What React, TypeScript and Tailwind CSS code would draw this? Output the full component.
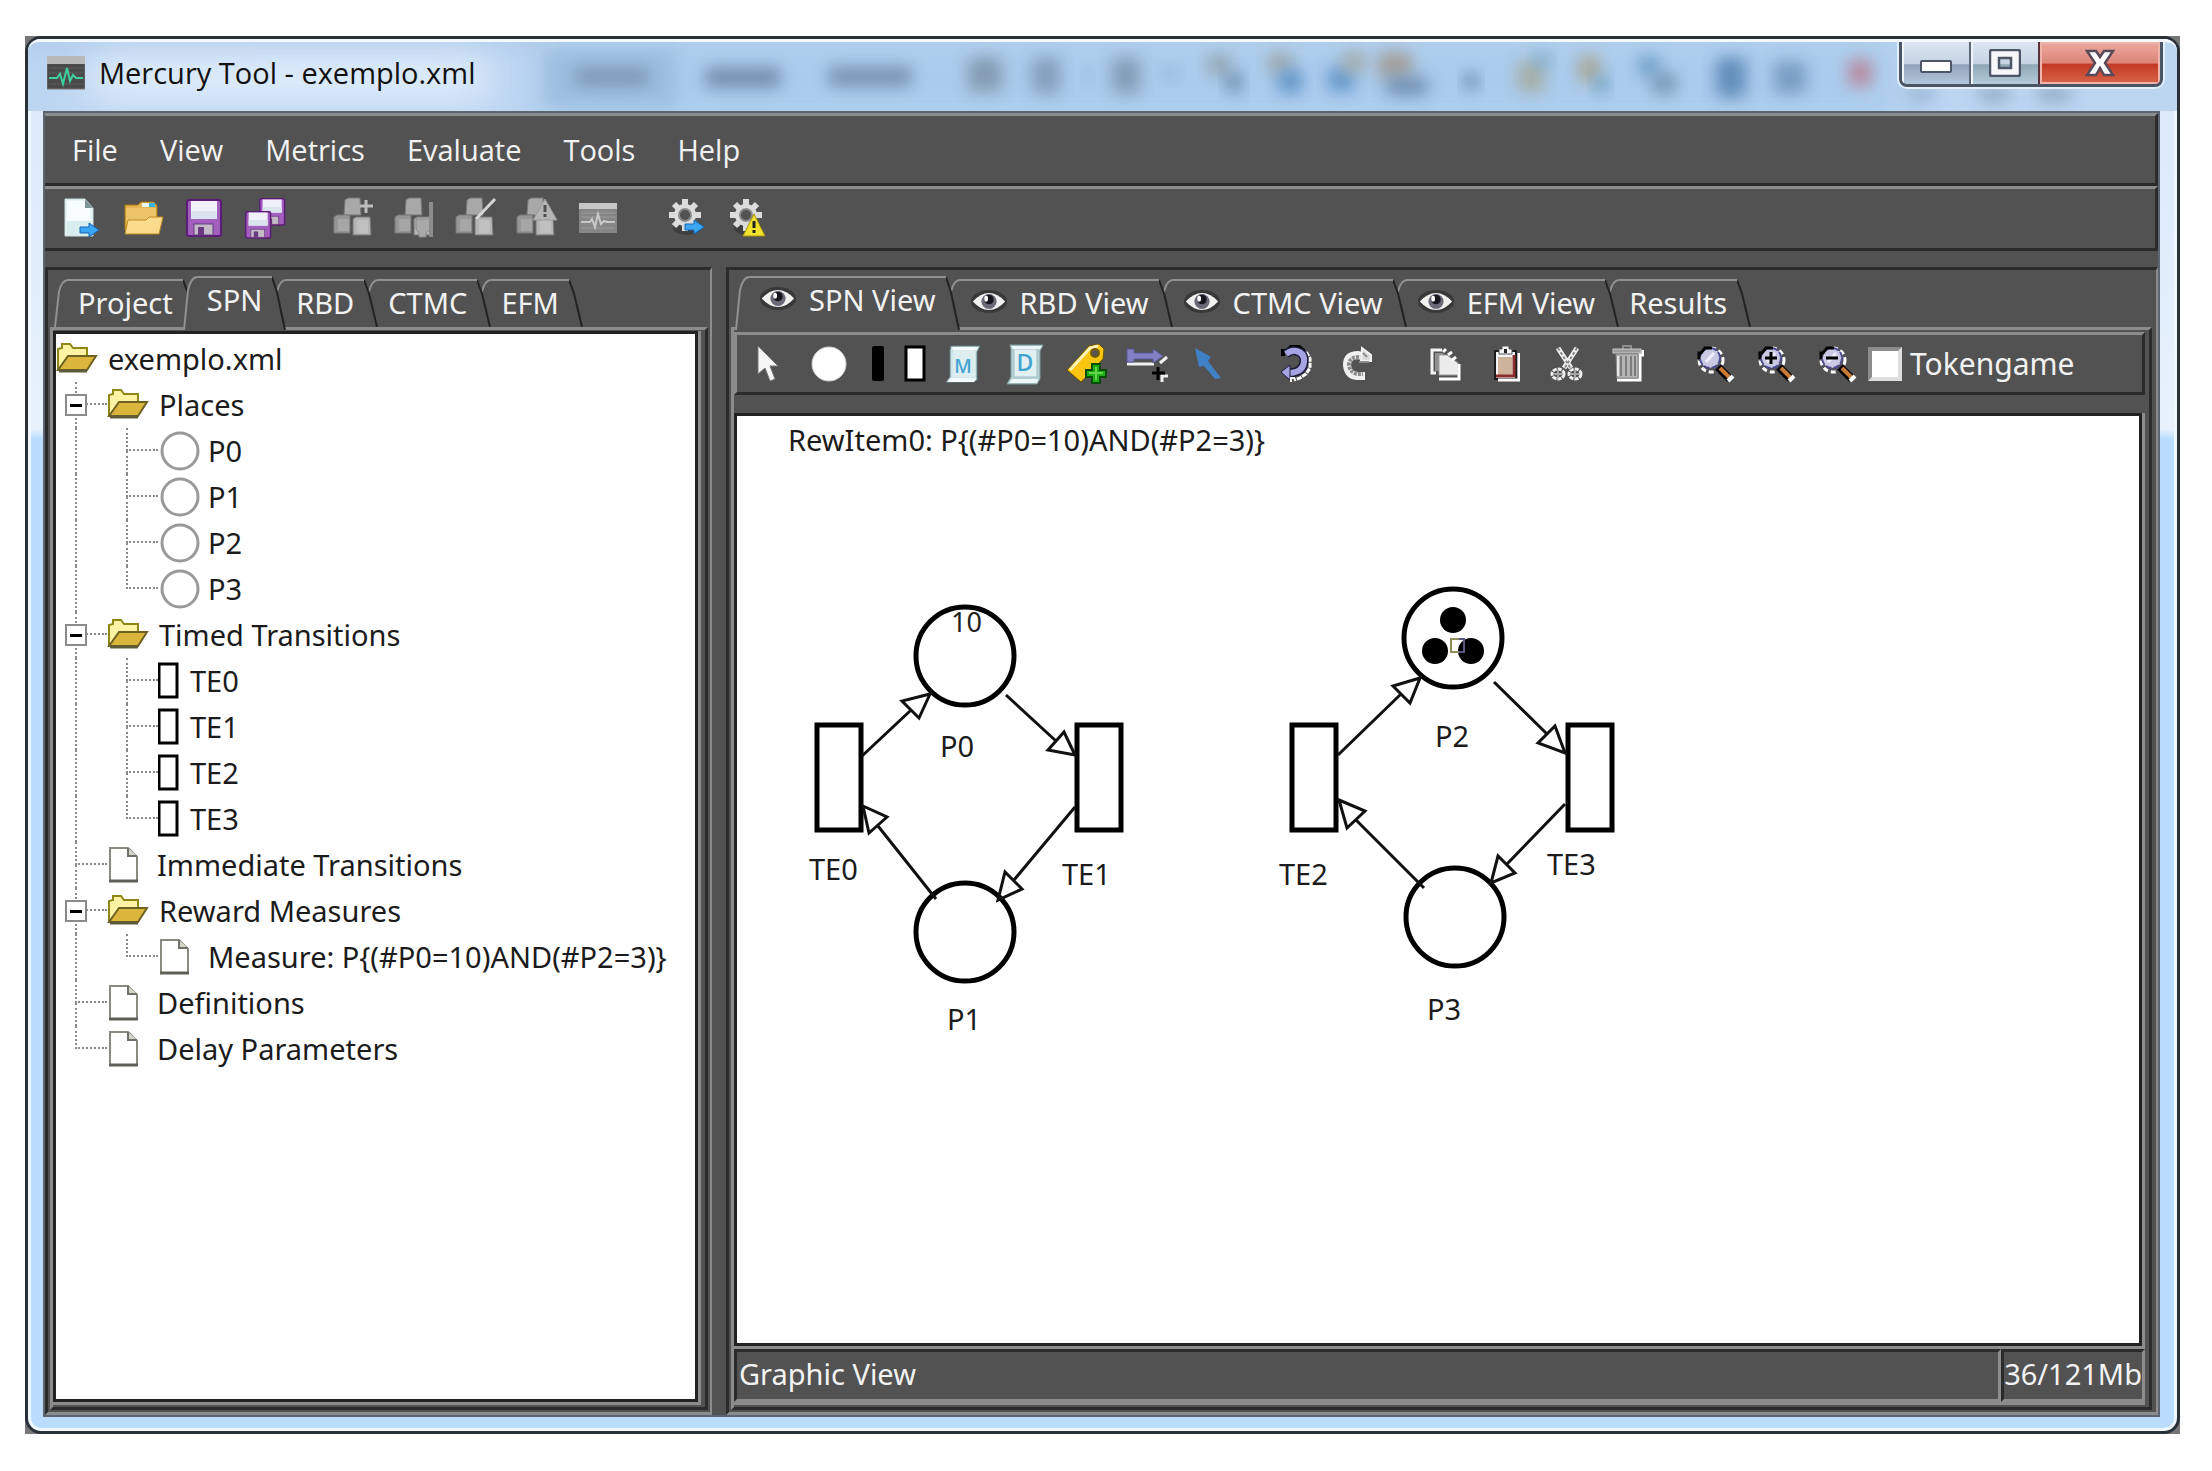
import React from "react";

type IconProps = { w: number; h: number; children: React.ReactNode };

function Icon({ w, h, children }: IconProps) {
  return (
    <svg width={w} height={h} viewBox={`0 0 ${w} ${h}`} fill="none" aria-hidden="true" className="shrink-0">
      {children}
    </svg>
  );
}

/* ---------- title bar ---------- */

function AppIcon() {
  return (
    <Icon w={38} h={34}>
      <rect x="0" y="1" width="38" height="32" fill="#4a4a4a" stroke="#777" />
      <rect x="0" y="0" width="38" height="8" fill="#b9b9b9" />
      <path d="M2 12H36M2 17H36M2 28H36" stroke="#5c5c5c" />
      <path d="M2 22H10L13 18L16 28L20 12L23 25L26 19L29 22H36" stroke="#3fd0a0" strokeWidth="2" />
    </Icon>
  );
}

function GlassBlobs() {
  const blobs: [number, number, number, number, string][] = [
    [575, 26, 74, 20, "#7c97b6"],
    [705, 26, 76, 22, "#6f8aaa"],
    [828, 25, 84, 22, "#7590b0"],
    [968, 16, 34, 36, "#8097ac"],
    [1032, 16, 28, 38, "#7f9ab8"],
    [1084, 30, 8, 10, "#8aa5c2"],
    [1112, 16, 28, 38, "#7f98b0"],
    [1162, 28, 16, 10, "#8fabc9"],
    [1208, 12, 22, 24, "#93a5ac"],
    [1226, 30, 16, 24, "#6c8cab"],
    [1268, 10, 24, 24, "#9fa9a9"],
    [1278, 28, 24, 26, "#5f93c6"],
    [1328, 26, 26, 26, "#5f93c6"],
    [1342, 10, 24, 22, "#a4aaa5"],
    [1378, 10, 34, 28, "#a39c93"],
    [1386, 36, 42, 20, "#6e8caf"],
    [1464, 32, 14, 18, "#6484a6"],
    [1518, 20, 26, 32, "#a5aa9c"],
    [1534, 12, 16, 14, "#6fa4c4"],
    [1578, 14, 22, 28, "#aaa590"],
    [1594, 34, 14, 20, "#6ba0c0"],
    [1638, 14, 22, 22, "#6d9fc4"],
    [1652, 32, 24, 22, "#7391ae"],
    [1716, 16, 30, 42, "#5c88b4"],
    [1774, 20, 32, 34, "#7299bd"],
    [1848, 18, 24, 28, "#b98597"],
    [1908, 48, 26, 14, "#94afcc"],
    [1978, 48, 32, 14, "#8ba3bb"],
    [2036, 48, 36, 14, "#8ba3bb"],
  ];
  return (
    <svg className="absolute inset-0 h-full w-full" aria-hidden="true" preserveAspectRatio="none" viewBox="28 0 2149 72">
      <defs>
        <filter id="soft" x="-50%" y="-100%" width="200%" height="300%">
          <feGaussianBlur stdDeviation="8" />
        </filter>
        <filter id="wide" x="-30%" y="-60%" width="160%" height="220%">
          <feGaussianBlur stdDeviation="22" />
        </filter>
      </defs>
      <rect x="540" y="-10" width="1360" height="100" fill="#9cc2e8" opacity="0.55" filter="url(#wide)" />
      <rect x="-10" y="-20" width="560" height="34" fill="#b2cdec" opacity="0.8" filter="url(#soft)" />
      <rect x="90" y="16" width="400" height="42" fill="#eef5fd" opacity="0.9" filter="url(#wide)" />
      <rect x="545" y="8" width="130" height="58" fill="#93b4d6" opacity="0.6" filter="url(#soft)" />
      {blobs.map(([x, y, w, h, c]) => (
        <rect key={x} x={x} y={y} width={w} height={h} rx="6" fill={c} opacity="0.9" filter="url(#soft)" />
      ))}
    </svg>
  );
}

function TitleBar() {
  return (
    <header className="relative flex h-[72px] shrink-0 items-start overflow-hidden rounded-t-xl border-t-3 border-[#f4f9ff] bg-[#bcd6f2]">
      <GlassBlobs />
      <div className="relative flex flex-1 items-center gap-3.5 self-stretch pb-2 pl-[19px]">
        <AppIcon />
        <h1 className="font-['Open_Sans',sans-serif] text-[29px] leading-9 whitespace-nowrap text-[#111]">Mercury Tool - exemplo.xml</h1>
      </div>
      <div className="relative mr-3.5 flex h-[45px] shrink-0 overflow-hidden rounded-b-lg border-3 border-t-0 border-[#4b5563] shadow-[0_0_0_2px_#e3effb]">
        <button aria-label="Minimize" className="flex w-[69px] items-end justify-center border-r-2 border-[#5b6676] bg-[linear-gradient(#dce6f2_0%,#c5d3e2_52%,#8fa3ba_54%,#b4c6da_100%)] pb-2.5 shadow-[inset_2px_0_0_#eef4fa]">
          <Icon w={32} h={14}>
            <rect x="1" y="1" width="30" height="11" rx="1" fill="#fff" stroke="#4c5668" strokeWidth="2" />
          </Icon>
        </button>
        <button aria-label="Maximize" className="flex w-[69px] items-center justify-center border-r-2 border-[#5b3038] bg-[linear-gradient(#dce6f2_0%,#c5d3e2_52%,#8fa8b5_54%,#b4cbda_100%)] shadow-[inset_2px_0_0_#eef4fa]">
          <Icon w={32} h={28}>
            <path fillRule="evenodd" d="M1 3Q1 1 3 1H29Q31 1 31 3V25Q31 27 29 27H3Q1 27 1 25ZM10 9V19H22V9Z" fill="#f7f7f7" stroke="#4c5668" strokeWidth="2.5" />
          </Icon>
        </button>
        <button aria-label="Close" className="flex w-[120px] items-center justify-center bg-[linear-gradient(#ecaaa0_0%,#dd8377_50%,#c43a24_53%,#d9634a_100%)] shadow-[inset_0_0_0_2px_#f0b5aa]">
          <Icon w={30} h={28}>
            <path d="M2 2H11L15 8L19 2H28L20 14L28 26H19L15 19L11 26H2L10 14Z" fill="#fff" stroke="#5a4a58" strokeWidth="2.5" />
          </Icon>
        </button>
      </div>
    </header>
  );
}

/* ---------- main toolbar icons ---------- */

function BlueArrow({ x, y }: { x: number; y: number }) {
  return (
    <path transform={`translate(${x} ${y})`} d="M0 4H9V0L19 7L9 14V10H0Z" fill="#3ba7f2" stroke="#1667b8" strokeWidth="1" />
  );
}

function NewIcon() {
  return (
    <Icon w={38} h={42}>
      <path d="M2 2H22L30 11V39H2Z" fill="#eaf6f6" stroke="#c9dede" />
      <path d="M4 4H20L27 12V37H4Z" fill="#f8fdfd" />
      <path d="M4 24H28V38H4Z" fill="#d8eeee" />
      <path d="M22 2V11H30Z" fill="#7d9696" />
      <BlueArrow x={17} y={26} />
    </Icon>
  );
}

function OpenIcon() {
  return (
    <Icon w={42} h={36}>
      <path d="M3 5H16L19 2H32L35 6V30H3Z" fill="#e5b450" stroke="#a87413" />
      <path d="M20 3H32V7H20Z" fill="#e8f6fa" />
      <path d="M27 3H33V7H27Z" fill="#35b4dc" />
      <path d="M4 8H34V22H4Z" fill="#eec46a" />
      <path d="M6 20H24L27 17H41L37 34H3Z" fill="#fbdc8c" stroke="#c08a22" />
    </Icon>
  );
}

function Floppy({ x, y, s }: { x: number; y: number; s: number }) {
  return (
    <g transform={`translate(${x} ${y}) scale(${s})`}>
      <rect x="1" y="1" width="34" height="36" rx="2" fill="#a35fbd" stroke="#5d1b78" strokeWidth="2" />
      <rect x="5" y="2" width="26" height="18" fill="#f1f1fb" />
      <rect x="5" y="12" width="26" height="8" fill="#dbe4ee" />
      <rect x="8" y="25" width="19" height="11" fill="#c3bcc8" stroke="#6a3b7d" />
      <rect x="12" y="28" width="6" height="8" fill="#6a3a80" />
    </g>
  );
}

function SaveIcon() {
  return (
    <Icon w={38} h={40}>
      <Floppy x={1} y={1} s={1} />
    </Icon>
  );
}

function SaveAllIcon() {
  return (
    <Icon w={42} h={42}>
      <Floppy x={15} y={1} s={0.73} />
      <Floppy x={1} y={14} s={0.73} />
    </Icon>
  );
}

function Cubes({ children }: { children: React.ReactNode }) {
  return (
    <Icon w={42} h={42}>
      <g stroke="#787878">
        <path d="M12 3L15 1H27L28 18H11Z" fill="#a8a8a8" />
        <path d="M1 20L4 18H17V36H1Z" fill="#969696" />
        <path d="M20 22L23 20H37L38 38H20Z" fill="#b4b4b4" />
      </g>
      <path d="M5 22H16V34H5Z" fill="#a6a6a6" />
      <path d="M24 23H35V36H24Z" fill="#c0c0c0" />
      {children}
    </Icon>
  );
}

function CubesAddIcon() {
  return (
    <Cubes>
      <path d="M33 3V16M27 9H40" stroke="#bdbdbd" strokeWidth="3" />
    </Cubes>
  );
}
function CubesEraseIcon() {
  return (
    <Cubes>
      <path d="M22 22H36V33L32 36V40H25V36L22 32Z" fill="#a9a9a9" stroke="#8a8a8a" />
      <path d="M37 5V40" stroke="#8c8c8c" strokeWidth="4" />
    </Cubes>
  );
}
function CubesEditIcon() {
  return (
    <Cubes>
      <path d="M40 2L21 22" stroke="#d6d6d6" strokeWidth="3" />
    </Cubes>
  );
}
function CubesWarnIcon() {
  return (
    <Cubes>
      <path d="M29 2L41 23H17Z" fill="#b5b5b5" stroke="#989898" />
      <path d="M29 8V15M29 17V20" stroke="#4f4f4f" strokeWidth="3" />
    </Cubes>
  );
}
function MonitorIcon() {
  return (
    <Icon w={40} h={32}>
      <rect x="1" y="1" width="38" height="30" fill="#868686" />
      <rect x="1" y="1" width="38" height="6" fill="#c6c6c6" />
      <path d="M3 11H37M3 15H37M3 26H37" stroke="#9b9b9b" />
      <path d="M3 20H12L14 17L17 25L20 12L23 22L26 19L29 20H37" stroke="#c9c9c9" strokeWidth="2" />
    </Icon>
  );
}

function Gear() {
  return (
    <g>
      <ellipse cx="20" cy="30" rx="14" ry="7" fill="#333" opacity="0.6" />
      <g stroke="#dcdcdc" strokeWidth="6">
        <path d="M18 1V33M2 17H34M7 6L29 28M29 6L7 28" />
      </g>
      <circle cx="18" cy="17" r="11" fill="#dcdcdc" />
      <circle cx="18" cy="17" r="6" fill="#525252" stroke="#8a8a8a" strokeWidth="2" />
    </g>
  );
}

function GearRunIcon() {
  return (
    <Icon w={40} h={40}>
      <Gear />
      <BlueArrow x={18} y={22} />
    </Icon>
  );
}
function GearWarnIcon() {
  return (
    <Icon w={40} h={40}>
      <Gear />
      <path d="M26 16L37 38H15Z" fill="#f2e22e" stroke="#a8940a" strokeWidth="1" />
      <path d="M26 23V30M26 32V35" stroke="#222" strokeWidth="3" />
    </Icon>
  );
}

/* ---------- view toolbar icons ---------- */

function EyeIcon() {
  return (
    <svg width="38" height="25" viewBox="0 0 40 26" fill="none" aria-hidden="true" className="shrink-0">
      <ellipse cx="20" cy="13" rx="19" ry="12" fill="#353535" opacity="0.9" />
      <path d="M3 13Q11 4 20 4T37 13Q29 22 20 22T3 13Z" fill="#f0f0ee" />
      <circle cx="20" cy="13" r="8" fill="#6c6878" />
      <circle cx="20" cy="11" r="5" fill="#17151d" />
      <ellipse cx="17" cy="10" rx="2" ry="3" fill="#fff" />
    </svg>
  );
}

function PointerIcon() {
  return (
    <Icon w={24} h={38}>
      <path d="M2 1L22 21H14L19 34L14 36L9 23L2 29Z" fill="#f6f6f6" stroke="#777" />
    </Icon>
  );
}
function PlaceIcon() {
  return (
    <Icon w={36} h={36}>
      <circle cx="18" cy="18" r="17" fill="#fff" stroke="#d0d0d0" />
    </Icon>
  );
}
function ImmediateIcon() {
  return (
    <Icon w={12} h={36}>
      <rect width="12" height="35" rx="2" fill="#000" />
    </Icon>
  );
}
function TimedIcon() {
  return (
    <Icon w={22} h={38}>
      <rect x="2" y="2" width="18" height="33" fill="#fff" stroke="#000" strokeWidth="3" />
    </Icon>
  );
}

function ScrollM() {
  return (
    <Icon w={38} h={40}>
      <path d="M6 2H35L32 8V36L29 38H1L5 33V6Z" fill="#cfe6e9" stroke="#5f7f83" />
      <path d="M8 6H30V33H8Z" fill="#deeef0" />
      <path d="M2 38L6 34H31L29 38ZM7 3H33L32 6H8Z" fill="#f4fbfb" />
      <text x="18" y="29" textAnchor="middle" fontSize="19" fontWeight="600" fill="#43a4d0" fontFamily="Open Sans, sans-serif">
        M
      </text>
    </Icon>
  );
}

function ScrollD() {
  return (
    <Icon w={38} h={42}>
      <path d="M4 2H37L34 8V36L31 41H1L5 34V6Z" fill="#b5cfd3" stroke="#7f9da1" />
      <path d="M8 6H31V34H8Z" fill="#e2f0f2" stroke="#a3c0c4" />
      <path d="M3 40L6 36H32L31 40ZM5 3H36L34 6H7Z" fill="#eef7f8" />
      <text x="19" y="28" textAnchor="middle" fontSize="23" fontWeight="600" fill="#43a4d0" fontFamily="Open Sans, sans-serif">
        D
      </text>
    </Icon>
  );
}

function TagIcon() {
  return (
    <Icon w={42} h={42}>
      <path d="M2 27L24 3L34 1L39 6L38 16L16 39Z" fill="#fbc511" stroke="#6f5300" strokeWidth="1" />
      <path d="M5 27L25 5L33 3" stroke="#fff3b8" strokeWidth="3" />
      <circle cx="30" cy="10" r="4" fill="#555" stroke="#7a5b00" strokeWidth="2" />
      <path d="M27 21H35V27H41V34H35V40H27V34H21V27H27Z" fill="#1fae14" stroke="#064d05" strokeWidth="2" />
      <path d="M31 24V37M24 30H38" stroke="#62d94c" strokeWidth="2" />
    </Icon>
  );
}
function ArcIcon() {
  return (
    <Icon w={42} h={38}>
      <path d="M1 19H28M34 18L41 12" stroke="#f2f2f2" strokeWidth="3" />
      <path d="M1 4H8V8H27V4L37 11L27 18V14H8V17H1Z" fill="#8380c4" stroke="#5a5796" />
      <path d="M36 37V31H42" stroke="#eee" strokeWidth="3" />
      <path d="M32 22V35M26 28H39" stroke="#000" strokeWidth="3" />
    </Icon>
  );
}
function BlueLineIcon() {
  return (
    <Icon w={30} h={36}>
      <path d="M2 2L18 11L15 15L28 32L22 33L11 20L6 21Z" fill="#4080c6" />
    </Icon>
  );
}
function UndoIcon() {
  return (
    <Icon w={36} h={40}>
      <path d="M5 12V7H9L13 3H21L26 7" stroke="#000" strokeWidth="4" />
      <path d="M28 8L32 14V24L28 30L22 34L16 36" stroke="#fff" strokeWidth="3" strokeDasharray="5 1" />
      <path d="M8 10Q13 6 18 7Q27 9 26 18Q25 28 12 29" stroke="#1c1c3c" strokeWidth="9" />
      <path d="M8 10Q13 6 18 7Q27 9 26 18Q25 28 12 29" stroke="#a6a4e2" strokeWidth="6" />
      <path d="M12 21L3 28L12 36Z" fill="#a6a4e2" stroke="#1c1c3c" strokeWidth="1" />
      <path d="M13 38V34H17" stroke="#f2f2f2" strokeWidth="2" />
    </Icon>
  );
}
function RedoIcon() {
  return (
    <Icon w={32} h={36}>
      <path d="M24 11L17 9Q6 9 6 19Q7 29 16 30H24" stroke="#f0f0f0" strokeWidth="8" />
      <path d="M22 12L16 11Q8 12 8 19Q9 26 16 28H22" stroke="#8c8c8c" strokeWidth="4" strokeDasharray="3 1" />
      <path d="M21 2L30 9V15H20Z" fill="#dcdcdc" stroke="#f4f4f4" strokeWidth="2" />
      <path d="M22 7L26 11M18 16H28" stroke="#8c8c8c" strokeWidth="2" />
    </Icon>
  );
}
function CopyIcon() {
  return (
    <Icon w={34} h={36}>
      <path d="M14 4H4V27H8" stroke="#f3f3f3" strokeWidth="3" />
      <path d="M7 7H15V25H7Z" fill="#8f8f8f" />
      <path d="M11 9H19L30 17V29H11Z" fill="#ececec" stroke="#9d9d9d" />
      <path d="M15 6L18 3M20 9L24 6M24 14L28 11" stroke="#fff" strokeWidth="3" />
      <path d="M11 33H31V18" stroke="#fff" strokeWidth="3" />
    </Icon>
  );
}
function PasteIcon() {
  return (
    <Icon w={28} h={38}>
      <path d="M3 6H24V34H3Z" fill="#f4f4f4" stroke="#1b1b1b" strokeWidth="2" />
      <path d="M6 35H27V8" stroke="#fff" strokeWidth="3" />
      <path d="M6 12H20V30H6Z" fill="#cfb49c" />
      <path d="M22 10V31H4" stroke="#8d2d2d" strokeWidth="3" />
      <path d="M7 8V4H10V1H17V4H20V9H7Z" fill="#f5f5f5" stroke="#555" />
      <rect x="12" y="4" width="3" height="4" fill="#222" />
    </Icon>
  );
}
function CutIcon() {
  return (
    <Icon w={34} h={38}>
      <path d="M8 3L21 23M27 3L14 23" stroke="#f1f1f1" strokeWidth="5" />
      <path d="M8 3L21 24M27 3L14 24" stroke="#8a8a8a" strokeWidth="2" strokeDasharray="3 2" />
      <ellipse cx="8" cy="29" rx="6" ry="5" stroke="#efefef" strokeWidth="3" strokeDasharray="4 1" />
      <ellipse cx="25" cy="29" rx="6" ry="5" stroke="#efefef" strokeWidth="3" strokeDasharray="4 1" />
      <path d="M4 29H12M8 25V33M21 29H29M25 25V33" stroke="#a5a5a5" strokeWidth="2" />
    </Icon>
  );
}
function TrashIcon() {
  return (
    <Icon w={32} h={38}>
      <path d="M11 4V1H19V4" stroke="#8e8e8e" strokeWidth="2" />
      <rect x="1" y="4" width="28" height="4" fill="#9c9c9c" stroke="#c9c9c9" />
      <path d="M5 35H28V10H31V5" stroke="#fff" strokeWidth="3" />
      <path d="M4 9H26V33H5Z" fill="#b5b5b5" stroke="#8a8a8a" />
      <path d="M9 11V31M14 11V31M19 11V31M23 11V31" stroke="#7d7d7d" strokeWidth="2" />
      <path d="M6 11V31" stroke="#e5e5e5" strokeWidth="2" />
    </Icon>
  );
}
function ZoomIcon({ sign }: { sign?: "+" | "-" }) {
  return (
    <Icon w={38} h={38}>
      <circle cx="14" cy="15" r="12" stroke="#fff" strokeWidth="3" strokeDasharray="5 3" />
      <circle cx="13" cy="13" r="10" fill="#c9c9e4" stroke="#4c4a92" strokeWidth="2" strokeDasharray="6 2" />
      <path d="M2 14V8H4L8 3H15" stroke="#000" strokeWidth="3" />
      <path d="M9 17L17 8" stroke="#ededfb" strokeWidth="3" />
      {sign && <path d={sign === "+" ? "M13 7V19M7 13H19" : "M7 13H19"} stroke="#000" strokeWidth="3" />}
      <path d="M21 22L33 34" stroke="#000" strokeWidth="8" />
      <path d="M23 23L34 34" stroke="#c97a35" strokeWidth="4" />
      <path d="M31 36L36 31" stroke="#fff" strokeWidth="4" />
    </Icon>
  );
}

/* ---------- tabs ---------- */

type Tab = { label: string; z: string; selected?: boolean; eye?: boolean };

function TabStrip({ tabs }: { tabs: Tab[] }) {
  return (
    <div role="tablist" className="flex h-[57px] items-end pl-1">
      {tabs.map((t) => (
        <button
          key={t.label}
          role="tab"
          aria-selected={!!t.selected}
          className={`relative -mr-3.5 flex items-stretch ${t.z} ${t.selected ? "-mb-[3px] h-[54px]" : "h-12"}`}
        >
          <svg className="h-full w-3.5 shrink-0" viewBox="0 0 14 50" preserveAspectRatio="none" aria-hidden="true">
            <path d="M1 50L5 13Q8 1 14 1V50Z" fill="#525252" />
            <path d="M1 50L5 13Q8 1 14 1" fill="none" stroke="#909090" strokeWidth="2" />
          </svg>
          <span className="flex items-start gap-3 border-t-2 border-[#909090] bg-[#525252] px-2.5">
            {t.eye && (
              <span className="flex h-10 items-center">
                <EyeIcon />
              </span>
            )}
            <span className="text-[29px] leading-11 whitespace-nowrap text-[#f2f2f2]">{t.label}</span>
          </span>
          <svg className="h-full w-3.5 shrink-0" viewBox="0 0 14 50" preserveAspectRatio="none" aria-hidden="true">
            <path d="M0 1L5 15L13 50H0Z" fill="#525252" />
            <path d="M0 1L5 15L13 50" fill="none" stroke="#222" strokeWidth="2" />
          </svg>
        </button>
      ))}
    </div>
  );
}

/* ---------- project tree ---------- */

type Node = {
  label: string;
  kind: "folder" | "place" | "timed" | "doc";
  depth: 0 | 1 | 2;
  open?: boolean;
  last?: boolean;
};

const tree: Node[] = [
  { label: "exemplo.xml", kind: "folder", depth: 0 },
  { label: "Places", kind: "folder", depth: 1, open: true },
  { label: "P0", kind: "place", depth: 2 },
  { label: "P1", kind: "place", depth: 2 },
  { label: "P2", kind: "place", depth: 2 },
  { label: "P3", kind: "place", depth: 2, last: true },
  { label: "Timed Transitions", kind: "folder", depth: 1, open: true },
  { label: "TE0", kind: "timed", depth: 2 },
  { label: "TE1", kind: "timed", depth: 2 },
  { label: "TE2", kind: "timed", depth: 2 },
  { label: "TE3", kind: "timed", depth: 2, last: true },
  { label: "Immediate Transitions", kind: "doc", depth: 1 },
  { label: "Reward Measures", kind: "folder", depth: 1, open: true },
  { label: "Measure: P{(#P0=10)AND(#P2=3)}", kind: "doc", depth: 2, last: true },
  { label: "Definitions", kind: "doc", depth: 1 },
  { label: "Delay Parameters", kind: "doc", depth: 1, last: true },
];

const iconSlot: Record<Node["kind"], string> = {
  folder: "flex pr-2.5",
  place: "flex pl-0.5 pr-2",
  timed: "flex pr-2.5",
  doc: "flex pr-[18px]",
};

function Elbow({ last }: { last?: boolean }) {
  return (
    <span className="flex h-full w-[51px] shrink-0 flex-col pl-[19px]">
      <span className="h-1/2 border-b-2 border-l-2 border-dotted border-[#8a8a8a]" />
      <span className={last ? "h-1/2" : "h-1/2 border-l-2 border-dotted border-[#8a8a8a]"} />
    </span>
  );
}

function Trunk() {
  return (
    <span className="flex h-full w-[51px] shrink-0 pl-[19px]">
      <span className="h-full border-l-2 border-dotted border-[#8a8a8a]" />
    </span>
  );
}

function TreeIcon({ kind }: { kind: Node["kind"] }) {
  if (kind === "folder")
    return (
      <Icon w={42} h={38}>
        <path d="M2 30V9L6 8V4H14L17 8H31V17" fill="#fdf3a4" stroke="#8f8616" strokeWidth="2" />
        <path d="M2 30L12 16H40L31 30Z" fill="#dcb63c" stroke="#6d6220" strokeWidth="2" />
        <path d="M3 31H31" stroke="#5f5a3a" strokeWidth="3" />
      </Icon>
    );
  if (kind === "place")
    return (
      <Icon w={40} h={40}>
        <circle cx="20" cy="20" r="18" fill="#fff" stroke="#9a9a9a" strokeWidth="3" />
      </Icon>
    );
  if (kind === "timed")
    return (
      <Icon w={22} h={38}>
        <rect x="1" y="2" width="18" height="33" fill="#fff" stroke="#000" strokeWidth="3" />
      </Icon>
    );
  return (
    <Icon w={32} h={38}>
      <path d="M3 2H21L30 11V35H3Z" fill="#fff" stroke="#8a8a80" strokeWidth="2" />
      <path d="M21 2V10H30" fill="#d6d6c8" stroke="#70706a" strokeWidth="2" />
      <path d="M2 35H31" stroke="#5f5f58" strokeWidth="3" />
    </Icon>
  );
}

function TreeRow({ node }: { node: Node }) {
  return (
    <li className="relative flex h-[46px] items-center whitespace-nowrap">
      {node.depth === 2 && <Trunk />}
      {node.depth > 0 && <Elbow last={node.last} />}
      {node.open && (
        <button aria-label={`Collapse ${node.label}`} className="absolute left-[9px] flex size-[22px] items-center justify-center border-2 border-[#8a8a8a] bg-white">
          <span className="h-[3px] w-3 bg-black" />
        </button>
      )}
      <span className={iconSlot[node.kind]}>
        <TreeIcon kind={node.kind} />
      </span>
      <span className="text-[29px] leading-10 text-[#1b1b1b]">{node.label}</span>
    </li>
  );
}

/* ---------- petri net ---------- */

const places: [string, number, number, number, number][] = [
  ["P0", 965, 656, 940, 757],
  ["P1", 965, 932, 947, 1030],
  ["P2", 1453, 638, 1435, 747],
  ["P3", 1455, 917, 1427, 1020],
];
const transitions: [string, number, number, number][] = [
  ["TE0", 817, 809, 880],
  ["TE1", 1077, 1062, 885],
  ["TE2", 1292, 1279, 885],
  ["TE3", 1568, 1547, 875],
];
const arcs = [
  "M862 756L910 711M930 694L902 701L919 718Z",
  "M1006 695L1056 741M1075 755L1064 732L1048 750Z",
  "M1075 807L1014 880M998 900L1005 872L1022 889Z",
  "M936 899L878 826M863 806L887 817L869 833Z",
  "M1338 755L1401 694M1420 678L1393 686L1410 703Z",
  "M1494 682L1547 734M1565 753L1555 726L1538 743Z",
  "M1565 804L1507 864M1491 883L1498 856L1515 873Z",
  "M1424 888L1356 820M1339 800L1365 811L1347 828Z",
];

function PetriNet() {
  return (
    <svg width="1402" height="720" viewBox="737 416 1402 720" fill="none" className="block max-w-none" fontSize="29" fontFamily="Noto Sans, sans-serif">
      <text x="788" y="451" fill="#1b1b1b">RewItem0: P{"{"}(#P0=10)AND(#P2=3){"}"}</text>
      {places.map(([name, cx, cy, tx, ty]) => (
        <g key={name}>
          <circle cx={cx} cy={cy} r="49" fill="#fff" stroke="#000" strokeWidth="5" />
          <text x={tx} y={ty} fill="#1b1b1b">{name}</text>
        </g>
      ))}
      <text x="951" y="632" fontSize="27" fill="#222">10</text>
      {transitions.map(([name, x, tx, ty]) => (
        <g key={name}>
          <rect x={x} y="725" width="44" height="105" fill="#fff" stroke="#000" strokeWidth="5" />
          <text x={tx} y={ty} fill="#1b1b1b">{name}</text>
        </g>
      ))}
      {arcs.map((d) => (
        <path key={d} d={d} stroke="#111" strokeWidth="3" />
      ))}
      <circle cx="1453" cy="620" r="13" fill="#000" />
      <circle cx="1435" cy="651" r="13" fill="#000" />
      <circle cx="1471" cy="651" r="13" fill="#000" />
      <path d="M1459 639H1451V652H1459" stroke="#8f8c5c" strokeWidth="2" />
      <path d="M1459 639H1464V652H1459" stroke="#5b5784" strokeWidth="2" />
    </svg>
  );
}

/* ---------- application ---------- */

const mainTools: [string, React.ReactNode][][] = [
  [
    ["New", <NewIcon />],
    ["Open", <OpenIcon />],
    ["Save", <SaveIcon />],
    ["Save all", <SaveAllIcon />],
  ],
  [
    ["Add block", <CubesAddIcon />],
    ["Clear block", <CubesEraseIcon />],
    ["Edit block", <CubesEditIcon />],
    ["Check block", <CubesWarnIcon />],
    ["Monitor", <MonitorIcon />],
  ],
  [
    ["Run", <GearRunIcon />],
    ["Run with warnings", <GearWarnIcon />],
  ],
];

const viewTools: [string, React.ReactNode, string][][] = [
  [
    ["Select", <PointerIcon />, "w-[61px]"],
    ["Place", <PlaceIcon />, "w-[61px]"],
    ["Immediate transition", <ImmediateIcon />, "w-[37px]"],
    ["Timed transition", <TimedIcon />, "w-[37px]"],
    ["Measure", <ScrollM />, "w-[61px]"],
    ["Definition", <ScrollD />, "w-[61px]"],
    ["Label", <TagIcon />, "w-[61px]"],
    ["Arc", <ArcIcon />, "w-[61px]"],
    ["Inhibitor arc", <BlueLineIcon />, "w-[61px]"],
  ],
  [
    ["Undo", <UndoIcon />, "w-[61px]"],
    ["Redo", <RedoIcon />, "w-[61px]"],
  ],
  [
    ["Copy", <CopyIcon />, "w-[61px]"],
    ["Paste", <PasteIcon />, "w-[61px]"],
    ["Cut", <CutIcon />, "w-[61px]"],
    ["Delete", <TrashIcon />, "w-[61px]"],
  ],
  [
    ["Zoom", <ZoomIcon />, "w-[61px]"],
    ["Zoom in", <ZoomIcon sign="+" />, "w-[61px]"],
    ["Zoom out", <ZoomIcon sign="-" />, "w-[61px]"],
  ],
];

const panel =
  "flex min-h-0 flex-col border-t-3 border-l-3 border-r-2 border-b-3 border-t-[#2b2b2b] border-l-[#2b2b2b] border-r-[#8c8c8c] border-b-[#8c8c8c]";
const body =
  "flex min-h-0 flex-1 flex-col border-t-3 border-l-3 border-r-3 border-b-3 border-t-[#8c8c8c] border-l-[#8c8c8c] border-r-[#2b2b2b] border-b-[#2b2b2b]";

export default function App() {
  return (
    <div className="flex h-screen bg-white pt-9 pr-[35px] pb-[37px] pl-[25px] font-['Noto_Sans',sans-serif]">
      <div className="flex flex-1 bg-[#777]">
        <div className="flex min-w-0 flex-1 flex-col rounded-2xl border-3 border-[#2a3038] bg-[linear-gradient(#d9e8fa_0,#e8f2fd_390px,#b9dcff_400px,#b9dcff_100%)] shadow-[inset_0_0_0_3px_#eff7ff]">
          <TitleBar />
          <div className="mr-[17px] mb-3.5 ml-[15px] flex min-h-0 flex-1 flex-col border-2 border-[#5d6670] bg-[#525252]">
            <nav aria-label="Main menu" className="flex h-[73px] shrink-0 items-center gap-[42px] border-t-3 border-r-3 border-b-3 border-t-[#8c8c8c] border-r-[#2b2b2b] border-b-[#2b2b2b] pl-[27px] font-['Open_Sans',sans-serif]">
              {["File", "View", "Metrics", "Evaluate", "Tools", "Help"].map((m) => (
                <button key={m} className="text-[29px] leading-10 text-[#f2f2f2]">
                  {m}
                </button>
              ))}
            </nav>
            <div role="toolbar" aria-label="Main toolbar" className="flex h-[65px] shrink-0 items-center gap-7 border-t-3 border-r-3 border-b-3 border-t-[#8c8c8c] border-r-[#2b2b2b] border-b-[#2b2b2b] pb-0.5 pl-1.5">
              {mainTools.map((group, i) => (
                <div key={i} className="flex">
                  {group.map(([name, icon]) => (
                    <button key={name} aria-label={name} className="flex w-[61px] items-center justify-center">
                      {icon}
                    </button>
                  ))}
                </div>
              ))}
            </div>

            <main className="flex min-h-0 flex-1 gap-3.5 pt-4">
              <section aria-label="Project" className={`w-[667px] shrink-0 px-0.5 pb-0.5 ${panel}`}>
                <TabStrip
                  tabs={[
                    { label: "Project", z: "z-0" },
                    { label: "SPN", z: "z-50", selected: true },
                    { label: "RBD", z: "z-30" },
                    { label: "CTMC", z: "z-20" },
                    { label: "EFM", z: "z-10" },
                  ]}
                />
                <div className={`pt-px pr-1 pb-0.5 ${body}`}>
                  <div className="flex min-h-0 flex-1 border-r-3 border-b-3 border-[#8c8c8c]">
                    <ul className="min-w-0 flex-1 overflow-hidden border-3 border-[#222] bg-white pt-0.5">
                      {tree.map((n) => (
                        <TreeRow key={n.label} node={n} />
                      ))}
                    </ul>
                  </div>
                </div>
              </section>

              <section aria-label="Views" className={`min-w-0 flex-1 pr-1 pb-0.5 pl-0.5 ${panel}`}>
                <TabStrip
                  tabs={[
                    { label: "SPN View", z: "z-50", selected: true, eye: true },
                    { label: "RBD View", z: "z-40", eye: true },
                    { label: "CTMC View", z: "z-30", eye: true },
                    { label: "EFM View", z: "z-20", eye: true },
                    { label: "Results", z: "z-10" },
                  ]}
                />
                <div className={`pt-0.5 pr-1 pb-0.5 ${body}`}>
                  <div role="toolbar" aria-label="View toolbar" className="mb-[18px] flex h-[63px] shrink-0 items-center border-3 border-t-[#8c8c8c] border-r-[#2b2b2b] border-b-[#2b2b2b] border-l-[#8c8c8c]">
                    <div className="flex gap-[27px]">
                      {viewTools.map((group, i) => (
                        <div key={i} className="flex items-center">
                          {group.map(([name, icon, width]) => (
                            <button key={name} aria-label={name} className={`flex items-center justify-center ${width}`}>
                              {icon}
                            </button>
                          ))}
                        </div>
                      ))}
                    </div>
                    <label className="flex items-center gap-2 text-[30px] leading-10 text-[#f2f2f2]">
                      <input type="checkbox" className="size-[34px] appearance-none border-4 border-t-[#8c8c8c] border-r-[#dedede] border-b-[#dedede] border-l-[#8c8c8c] bg-white" />
                      Tokengame
                    </label>
                  </div>
                  <div className="flex min-h-0 flex-1 border-r-3 border-b-3 border-[#8c8c8c]">
                    <div className="min-w-0 flex-1 overflow-hidden border-3 border-[#222] bg-white">
                      <PetriNet />
                    </div>
                  </div>
                  <footer className="flex h-14 shrink-0 border-b-3 border-[#8c8c8c] text-[29px] leading-11 text-[#f2f2f2]">
                    <div className="flex-1 border-3 border-t-[#2b2b2b] border-r-[#8c8c8c] border-b-[#8c8c8c] border-l-[#2b2b2b] pl-0.5">Graphic View</div>
                    <div className="border-3 border-t-[#2b2b2b] border-r-[#8c8c8c] border-b-[#8c8c8c] border-l-[#2b2b2b]">36/121Mb</div>
                  </footer>
                </div>
              </section>
            </main>
          </div>
        </div>
      </div>
    </div>
  );
}
